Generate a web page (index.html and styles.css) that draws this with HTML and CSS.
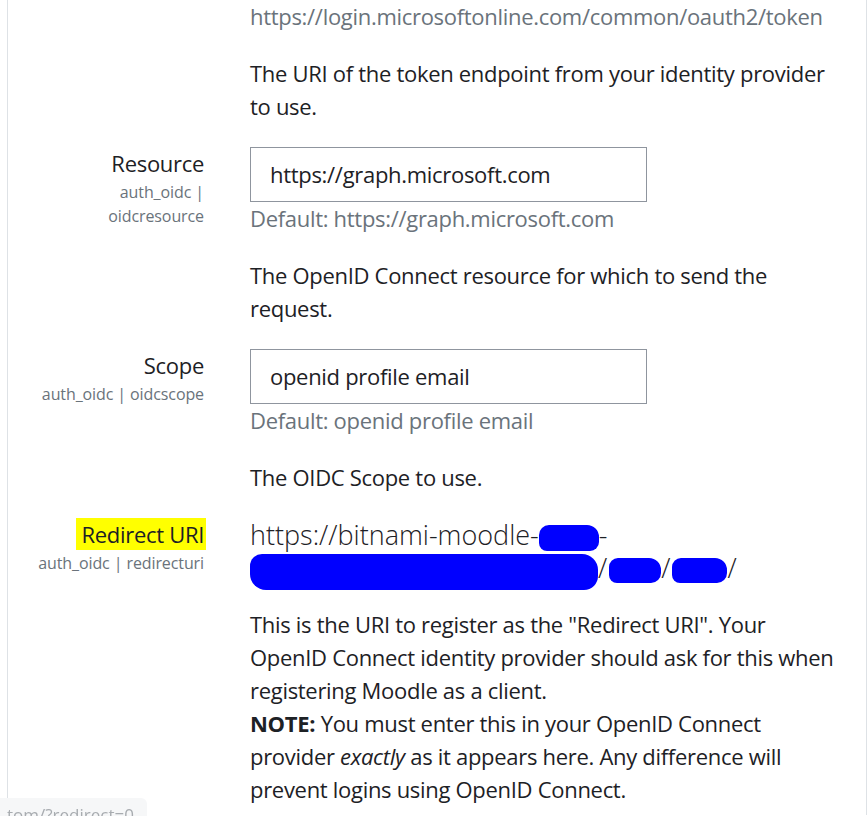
FILE: index.html
```html
<!DOCTYPE html>
<html lang="en">
<head>
<meta charset="utf-8">
<title>OpenID Connect settings</title>
<link rel="stylesheet" href="styles.css">
</head>
<body>
<div class="page">
  <div class="setting">
    <div class="label-col"></div>
    <div class="content-col">
      <div class="default">https://login.microsoftonline.com/common/oauth2/token</div>
      <div class="desc">The URI of the token endpoint from your identity provider to use.</div>
    </div>
  </div>

  <div class="setting">
    <div class="label-col">
      <div class="label">Resource</div>
      <div class="name">auth_oidc | oidcresource</div>
    </div>
    <div class="content-col">
      <div class="input">https://graph.microsoft.com</div>
      <div class="default">Default: https://graph.microsoft.com</div>
      <div class="desc">The OpenID Connect resource for which to send the request.</div>
    </div>
  </div>

  <div class="setting">
    <div class="label-col">
      <div class="label">Scope</div>
      <div class="name">auth_oidc | oidcscope</div>
    </div>
    <div class="content-col">
      <div class="input">openid profile email</div>
      <div class="default">Default: openid profile email</div>
      <div class="desc">The OIDC Scope to use.</div>
    </div>
  </div>

  <div class="setting">
    <div class="label-col">
      <div class="label"><span class="hl">Redirect URI</span></div>
      <div class="name">auth_oidc | redirecturi</div>
    </div>
    <div class="content-col">
      <div class="uri">https://bitnami-moodle-<span class="blob b1"></span>-<br><span class="blob b2"></span>/<span class="blob b3"></span>/<span class="blob b4"></span>/</div>
      <div class="desc">This is the URI to register as the "Redirect URI". Your OpenID Connect identity provider should ask for this when registering Moodle as a client.<br><strong>NOTE:</strong> You must enter this in your OpenID Connect provider <em>exactly</em> as it appears here. Any difference will prevent logins using OpenID Connect.</div>
    </div>
  </div>
</div>
<div class="status"><span>tom/?redirect=0</span></div>
</body>
</html>
```
FILE: styles.css
```css
html, body {
  margin: 0;
  padding: 0;
  background: #ffffff;
}

body {
  font-family: "Open Sans", "Noto Sans", sans-serif;
  font-size: 22px;
  line-height: 33px;
  letter-spacing: -0.3px;
  color: #1d2125;
}

.page {
  margin-left: 7px;
  width: 860px;
  min-height: 816px;
  box-sizing: border-box;
  border-left: 1px solid #dee2e6;
  border-right: 1px solid #dee2e6;
  border-top: 1px solid #ececec;
  margin-top: -1px;
}

.setting {
  display: grid;
  grid-template-columns: 196px 590px;
  column-gap: 46px;
  margin-bottom: 24px;
}

.label-col {
  text-align: right;
  padding-left: 24px;
}

.label {
  font-size: 22px;
  line-height: 33px;
}

.hl {
  background: #ffff00;
  padding: 1px 2px 1px 5px;
  margin-right: -2px;
}

.name {
  font-size: 16px;
  line-height: 24px;
  letter-spacing: -0.1px;
  color: #6a737b;
}

.default {
  color: #6a737b;
}

.desc {
  margin-top: 24px;
}

.input {
  box-sizing: border-box;
  width: 397px;
  height: 55px;
  border: 1px solid #8f959e;
  padding: 0 19px;
  line-height: 53px;
  color: #1d2125;
}

.uri {
  font-size: 27px;
  font-weight: 300;
  line-height: 33px;
  letter-spacing: 0;
  color: #1d2125;
}

.blob {
  display: inline-block;
  background: #0000ff;
  vertical-align: middle;
}

.b1 {
  width: 60px;
  height: 26px;
  border-radius: 10px 12px 9px 8px;
}

.b2 {
  width: 348px;
  height: 36px;
  border-radius: 12px 16px 14px 16px;
  margin-top: -4px;
  margin-bottom: -8px;
  vertical-align: -4px;
}

.b3 {
  width: 52px;
  height: 25px;
  border-radius: 9px 12px 10px 8px;
  margin-left: 2px;
}

.b4 {
  width: 55px;
  height: 25px;
  border-radius: 9px 12px 10px 8px;
  margin-left: 2px;
}

.desc strong {
  font-weight: 700;
}

.status {
  position: fixed;
  left: 0;
  bottom: 0;
  width: 147px;
  height: 18px;
  background: #f6f7f8;
  border-top-right-radius: 6px;
  overflow: hidden;
  font-family: "Open Sans", sans-serif;
  font-size: 17px;
  line-height: 24px;
  letter-spacing: 0;
  color: #a8acb0;
  padding-left: 7px;
  box-sizing: border-box;
}

.status span {
  display: block;
  margin-top: 5px;
}
```
